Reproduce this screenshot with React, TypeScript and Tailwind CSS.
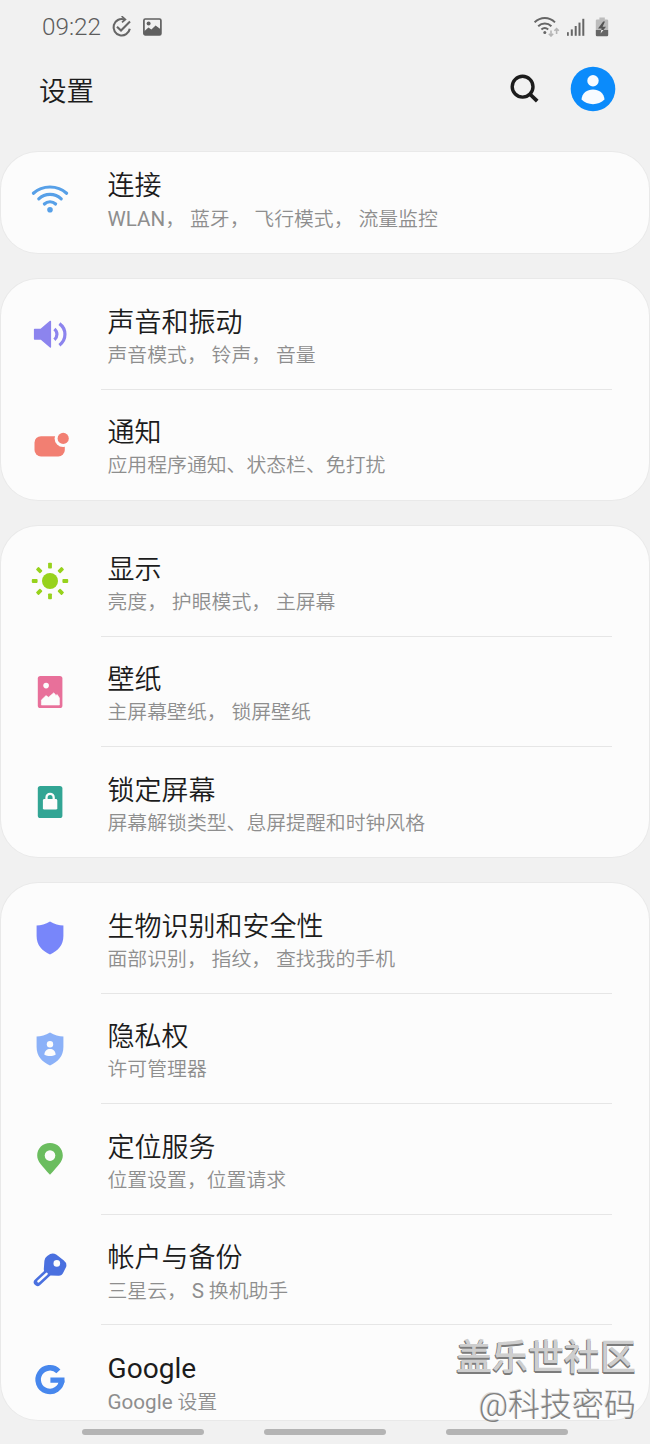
import type { ReactNode } from 'react';

type Item = {
  title: string;
  desc: string;
  icon: ReactNode;
};

const SHIELD = 'M20 3.6 C24.5 6.6 29 7.2 33.4 7.6 V18 C33.4 27 28 33 20 36.4 C12 33 6.6 27 6.6 18 V7.6 C11 7.2 15.5 6.6 20 3.6 Z';

const WifiIcon = (
  <g fill="none" stroke="#57a0e8" strokeWidth="3.2" strokeLinecap="round">
    <path d="M3.4 15.2 C12.5 6.9 27.5 6.9 36.6 15.2" />
    <path d="M8.8 20.8 C15 14.8 25 14.8 31.2 20.8" />
    <path d="M14.4 26 C17.5 23 22.5 23 25.6 26" />
    <circle cx="20" cy="31.8" r="2.8" fill="#57a0e8" stroke="none" />
  </g>
);

const SoundIcon = (
  <g fill="none" stroke="#8c84ee" strokeWidth="3.2">
    <path d="M4.6 15.4 H11 L20.4 7.4 V33 L11 25 H4.6 Z" fill="#8c84ee" strokeWidth="1.4" strokeLinejoin="round" />
    <path d="M24.4 15 C27.8 17.8 27.8 22.8 24.4 25.8" />
    <path d="M29.4 9.6 C36.8 15 36.8 25.6 29.4 31.2" />
  </g>
);

const NotificationIcon = (
  <g fill="#f27f72">
    <rect x="4.5" y="11.2" width="30.3" height="20.2" rx="6.5" />
    <circle cx="33.2" cy="13.4" r="8.6" fill="#fcfcfc" />
    <circle cx="33.2" cy="13.4" r="5.6" />
  </g>
);

const SunIcon = (
  <g fill="#97d21c">
    <circle cx="20" cy="20" r="8" />
    {[0, 45, 90, 135, 180, 225, 270, 315].map((deg) => (
      <rect key={deg} x="18.1" y="1.8" width="3.8" height="5.8" rx="0.8" transform={`rotate(${deg} 20 20)`} />
    ))}
  </g>
);

const WallpaperIcon = (
  <g>
    <rect x="7.8" y="4" width="24.6" height="32" rx="2.6" fill="#e8709a" />
    <circle cx="16.1" cy="13.6" r="2.8" fill="#fcfcfc" />
    <path d="M11.4 33 V28 L16 23.6 L18.5 25.2 L23.8 20.8 L26 23.4 L27.2 22.6 L29.4 26 V33 Z" fill="#fcfcfc" stroke="#fcfcfc" strokeWidth="0.6" strokeLinejoin="round" />
  </g>
);

const LockIcon = (
  <g>
    <rect x="7.8" y="4" width="24.6" height="32" rx="2.6" fill="#32a594" />
    <rect x="12.9" y="17" width="14.4" height="10.6" rx="1.4" fill="#fcfcfc" />
    <path d="M16.5 18 V15.6 A3.6 3.8 0 0 1 23.7 15.6 V18" fill="none" stroke="#fcfcfc" strokeWidth="2.3" />
  </g>
);

const ShieldIcon = <path d={SHIELD} fill="#7886fa" />;

const PrivacyIcon = (
  <g>
    <path d={SHIELD} fill="#8bb1f8" />
    <circle cx="20" cy="15.2" r="3.2" fill="#fcfcfc" />
    <path d="M14.4 25.8 C14.4 21.8 17 20 20 20 C23 20 25.6 21.8 25.6 25.8 C22.5 27.4 17.5 27.4 14.4 25.8 Z" fill="#fcfcfc" />
  </g>
);

const PinIcon = (
  <g>
    <path d="M20 4 C12.7 4 7.2 9.5 7.2 16.4 C7.2 22.5 12 26.6 20 35.8 C28 26.6 32.8 22.5 32.8 16.4 C32.8 9.5 27.3 4 20 4 Z" fill="#6bbd5f" />
    <circle cx="20" cy="16.6" r="5.3" fill="#fcfcfc" />
  </g>
);

const KeyIcon = (
  <g>
    <path d="M17.5 23 L7.6 32.2" stroke="#4a70df" strokeWidth="7.6" strokeLinecap="round" />
    <path d="M20.2 4 Q23.4 2.8 26.2 4.6 L33.6 10.2 Q37.2 13 36.2 16.8 L33.2 22.8 Q31.8 26 28.4 25.8 L20.8 25.4 Q14 24.4 13.8 19.2 L14.4 10.8 Q14.8 7.6 17.2 6 Z" fill="#4a70df" />
    <circle cx="26.8" cy="13.4" r="3.3" fill="#fcfcfc" />
    <path d="M16.6 23.8 L8.4 31.4" stroke="#fcfcfc" strokeWidth="2.4" strokeLinecap="round" />
  </g>
);

const GoogleIcon = (
  <g fill="none" stroke="#4787ed" strokeWidth="5.6">
    <path d="M28.4 11.4 A11.8 11.8 0 1 0 31.7 20.4" />
    <path d="M20.4 20.2 H34.5" strokeWidth="5.2" />
  </g>
);

const groups: Item[][] = [
  [{ title: '连接', desc: 'WLAN， 蓝牙， 飞行模式， 流量监控', icon: WifiIcon }],
  [
    { title: '声音和振动', desc: '声音模式， 铃声， 音量', icon: SoundIcon },
    { title: '通知', desc: '应用程序通知、状态栏、免打扰', icon: NotificationIcon },
  ],
  [
    { title: '显示', desc: '亮度， 护眼模式， 主屏幕', icon: SunIcon },
    { title: '壁纸', desc: '主屏幕壁纸， 锁屏壁纸', icon: WallpaperIcon },
    { title: '锁定屏幕', desc: '屏幕解锁类型、息屏提醒和时钟风格', icon: LockIcon },
  ],
  [
    { title: '生物识别和安全性', desc: '面部识别， 指纹， 查找我的手机', icon: ShieldIcon },
    { title: '隐私权', desc: '许可管理器', icon: PrivacyIcon },
    { title: '定位服务', desc: '位置设置，位置请求', icon: PinIcon },
    { title: '帐户与备份', desc: '三星云， S 换机助手', icon: KeyIcon },
    { title: 'Google', desc: 'Google 设置', icon: GoogleIcon },
  ],
];

// first and last cards are cut off by the scroll position
const cardClass = [
  'h-[101px] justify-end',
  'h-[221px]',
  'h-[331px]',
  'h-[537px]',
];

function StatusBar() {
  return (
    <div className="flex h-[54px] items-center pl-[42px] pr-[40px] text-[#5c5c5c]">
      <span className="w-[60px] text-[24.3px] font-light leading-none">09:22</span>
      <svg className="ml-[9px]" width="22" height="22" viewBox="0 0 22 22" fill="none" stroke="#666" strokeWidth="2.1">
        <path d="M13.2 3.4 A8.2 8.2 0 1 0 18.8 12.8" />
        <path d="M10.6 0.2 L14.4 3.4 L11 6.4" strokeWidth="1.7" />
        <path d="M6 10.8 L10 14.6 L19 5.6" />
      </svg>
      <svg className="ml-[9px]" width="20" height="20" viewBox="0 0 20 20">
        <rect x="1.9" y="2" width="17" height="15.8" rx="1.4" fill="none" stroke="#606060" strokeWidth="1.7" />
        <circle cx="6.6" cy="6.6" r="2" fill="#606060" />
        <path d="M2 17.6 V14.4 L6.4 10.6 L9.4 12.6 L13.6 8.4 L19 12.4 V17.6 Z" fill="#606060" />
      </svg>
      <div className="ml-auto flex items-center">
        <svg className="mb-[2px]" width="27" height="22" viewBox="0 0 27 22" fill="none" stroke="#666" strokeWidth="2">
          <path d="M0.6 7.4 C6.6 1.6 15 1.6 21 7.4" />
          <path d="M4.2 11.2 C8 7.6 13.6 7.6 17.4 11.2" />
          <path d="M7.4 14.6 C9.4 12.8 12.2 12.8 14.2 14.6" />
          <circle cx="10.8" cy="17.6" r="1.5" fill="#666" stroke="none" />
          <g stroke="#b5b5b5" strokeWidth="1.6">
            <path d="M17 15.4 V21 M14.8 18.8 L17 21 L19.2 18.8" />
            <path d="M22.6 19 V13.6 M20.4 15.8 L22.6 13.6 L24.8 15.8" />
          </g>
        </svg>
        <svg className="ml-[6px]" width="18" height="20" viewBox="0 0 18 20" fill="#666">
          <rect x="0" y="15.2" width="1.8" height="3.6" />
          <rect x="3.8" y="12.4" width="2" height="6.4" />
          <rect x="7.7" y="9" width="2" height="9.8" />
          <rect x="11.5" y="5.6" width="2" height="13.2" />
          <rect x="15.3" y="1.8" width="2" height="17" />
        </svg>
        <svg className="ml-[10px] mr-px" width="14" height="20" viewBox="0 0 14 20">
          <path d="M4.4 0.6 H9.8 V2.4 H12 Q13.2 2.4 13.2 3.6 V13 H0.8 V3.6 Q0.8 2.4 2 2.4 H4.4 Z" fill="#bcbcbc" />
          <path d="M0.8 13 H13.2 V18 Q13.2 19.2 12 19.2 H2 Q0.8 19.2 0.8 18 Z" fill="#666" />
          <path d="M8.2 4.6 L3 11.4 H6.6 L5.6 16.6 L11 9.8 H7.6 L10 4.6 Z" fill="#555" />
          <path d="M6.3 13 L5.6 16.6 L8.5 13 Z" fill="#f1f1f1" />
        </svg>
      </div>
    </div>
  );
}

function Header() {
  return (
    <header className="flex h-[98px] items-start justify-between pl-[39px] pr-[34px]">
      <h1 className="mt-[18px] text-[27.5px] font-[350] leading-[40px] text-[#1c1c1c]">设置</h1>
      <div className="flex items-center gap-[31px] pt-[12px]">
        <svg width="30" height="30" viewBox="0 0 30 30" fill="none" stroke="#1c1c1c" strokeWidth="3.4">
          <circle cx="13.6" cy="12.7" r="10.4" />
          <path d="M20.8 20 L28.2 27.2" strokeWidth="3.8" />
        </svg>
        <svg width="46" height="46" viewBox="0 0 46 46">
          <circle cx="23" cy="23" r="22.3" fill="#0b8bfb" />
          <circle cx="23" cy="14.8" r="5.7" fill="#f8fbff" />
          <path d="M11.5 33.6 C12 26.8 17 23.4 23 23.4 C29 23.4 34 26.8 34.5 33.6 C28.5 39.8 17.5 39.8 11.5 33.6 Z" fill="#f8fbff" />
        </svg>
      </div>
    </header>
  );
}

// latin words are set a little larger than the CJK text around them
function Label({ text }: { text: string }) {
  return text.split(/([A-Za-z]+)/).map((part, i) =>
    i % 2 ? <span key={i} className="text-[1.04em] font-normal">{part}</span> : part
  );
}

function SettingRow({ item, last }: { item: Item; last: boolean }) {
  return (
    <div className="flex h-[110.5px] shrink-0">
      <div className="flex w-[98px] shrink-0 items-center justify-center">
        <svg width="40" height="40" viewBox="0 0 40 40">
          {item.icon}
        </svg>
      </div>
      <div className={`ml-[2px] mr-[37px] flex-1 border-b pl-[6.5px] pt-[25.5px] ${last ? 'border-transparent' : 'border-[#e6e6e6]'}`}>
        <div className="h-[36px] text-[27px] font-[350] leading-[36px] text-[#1c1c1c]"><Label text={item.title} /></div>
        <div className="h-[30px] text-[19.85px] font-[350] leading-[30px] text-[#8e8e8e]"><Label text={item.desc} /></div>
      </div>
    </div>
  );
}

export default function App() {
  return (
    <div className="relative h-[1444px] w-full overflow-hidden bg-[#f1f1f1] font-['Roboto','Noto_Sans_CJK_SC',sans-serif]">
      <StatusBar />
      <Header />
      <main className="flex flex-col gap-[26px] px-px">
        {groups.map((items, i) => (
          <section
            key={items[0].title}
            className={`flex flex-col overflow-hidden rounded-[37px] bg-[#fcfcfc] ring-1 ring-[#e9e9e9] ${cardClass[i]}`}
          >
            {items.map((item, j) => (
              <SettingRow key={item.title} item={item} last={j === items.length - 1} />
            ))}
          </section>
        ))}
      </main>
      <nav className="mt-[9px] flex justify-between pl-[82px] pr-[82px]">
        <span className="h-[6px] w-[122px] rounded-full bg-[#b4b4b4]" />
        <span className="h-[6px] w-[122px] rounded-full bg-[#b4b4b4]" />
        <span className="h-[6px] w-[122px] rounded-full bg-[#b4b4b4]" />
      </nav>
      <div className="absolute bottom-[16px] right-[14px] text-right whitespace-nowrap">
        <div className="text-[36px] font-medium leading-[48px] text-[#cecece] [text-shadow:-1px_1px_0_#7c7c7c,0_2px_0_#7c7c7c]">盖乐世社区</div>
        <div className="text-[32px] font-light leading-[46px] text-[#808080] [text-shadow:-1px_-1px_0_#dcdcdc]">@科技密码</div>
      </div>
    </div>
  );
}
